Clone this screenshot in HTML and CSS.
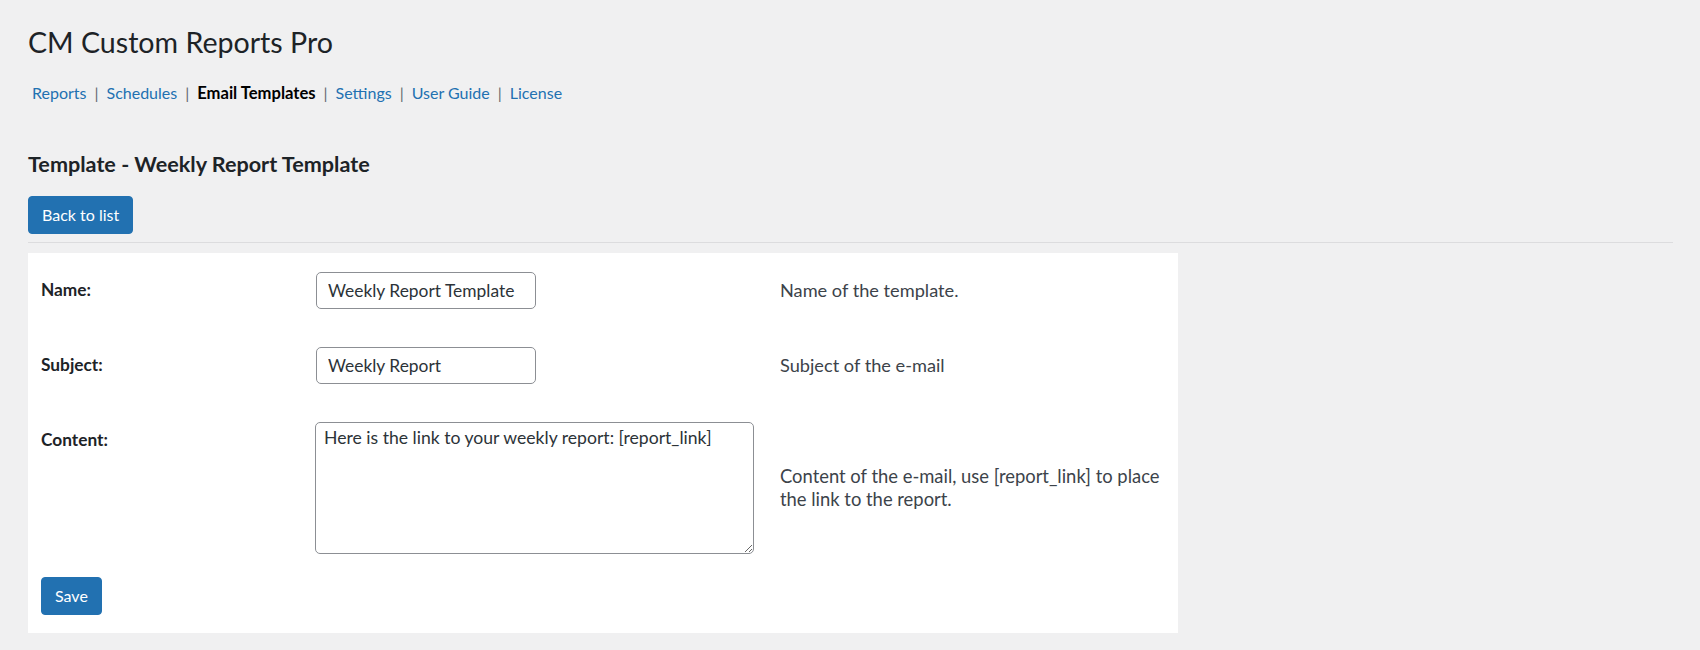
FILE: index.html
```html
<!DOCTYPE html>
<html lang="en">
<head>
<meta charset="utf-8">
<title>CM Custom Reports Pro</title>
<link rel="stylesheet" href="styles.css">
</head>
<body>
<div class="wrap">
  <h1 class="page-title">CM Custom Reports Pro</h1>
  <ul class="subnav">
    <li><a href="#">Reports</a><span class="sep">|</span></li>
    <li><a href="#">Schedules</a><span class="sep">|</span></li>
    <li><a href="#" class="current">Email Templates</a><span class="sep">|</span></li>
    <li><a href="#">Settings</a><span class="sep">|</span></li>
    <li><a href="#">User Guide</a><span class="sep">|</span></li>
    <li><a href="#">License</a></li>
  </ul>
  <h2 class="section-title">Template - Weekly Report Template</h2>
  <a href="#" class="button">Back to list</a>
  <hr class="divider">
  <form class="panel">
    <div class="row">
      <label class="label" for="name">Name:</label>
      <div class="field"><input id="name" class="text-input" type="text" value="Weekly Report Template"></div>
      <div class="desc">Name of the template.</div>
    </div>
    <div class="row">
      <label class="label" for="subject">Subject:</label>
      <div class="field"><input id="subject" class="text-input" type="text" value="Weekly Report"></div>
      <div class="desc">Subject of the e-mail</div>
    </div>
    <div class="row">
      <label class="label" for="content">Content:</label>
      <div class="field"><textarea id="content" class="text-area">Here is the link to your weekly report: [report_link]</textarea></div>
      <div class="desc desc-middle">Content of the e-mail, use [report_link] to place the link to the report.</div>
    </div>
    <div class="actions">
      <button type="button" class="button">Save</button>
    </div>
  </form>
</div>
</body>
</html>
```
FILE: styles.css
```css
html, body {
  margin: 0;
  padding: 0;
  background: #f0f0f1;
}
body {
  font-family: "Lato", "Noto Sans", sans-serif;
  color: #1d2327;
  font-size: 17px;
}
.wrap {
  padding: 0 27px 0 28px;
}
.page-title {
  margin: 22px 0 0;
  font-size: 28.6px;
  line-height: 40px;
  font-weight: 400;
  color: #1d2327;
}
.subnav {
  list-style: none;
  margin: 19px 0 0;
  padding: 0 0 0 4px;
  display: flex;
  font-size: 16px;
  line-height: 24px;
}
.subnav li {
  display: flex;
}
.subnav a {
  color: #2271b1;
  text-decoration: none;
}
.subnav a.current {
  color: #000;
  font-weight: 700;
  font-size: 16.6px;
}
.sep {
  color: #646970;
  margin: 0 8px;
}
.section-title {
  margin: 44px 0 0;
  font-size: 21.6px;
  line-height: 30px;
  font-weight: 700;
  color: #1d2327;
}
.button {
  display: inline-block;
  box-sizing: border-box;
  height: 38px;
  padding: 0 13px;
  border: 1px solid #2271b1;
  border-radius: 4px;
  background: #2271b1;
  color: #fff;
  font-family: inherit;
  font-size: 16px;
  line-height: 36px;
  text-decoration: none;
  cursor: pointer;
}
.wrap > .button {
  margin-top: 17px;
  vertical-align: top;
}
.divider {
  margin: 8px 0 0;
  border: 0;
  border-top: 1px solid #dcdcde;
  height: 0;
}
.panel {
  margin-top: 10px;
  width: 1150px;
  box-sizing: border-box;
  background: #fff;
  padding: 19px 13px 18px;
  display: flex;
  flex-direction: column;
  gap: 38px;
}
.row {
  display: grid;
  grid-template-columns: 275px 464px 385px;
  align-items: start;
}
.label {
  font-size: 17.3px;
  line-height: 24px;
  font-weight: 700;
  color: #1d2327;
  padding-top: 6px;
}
.desc {
  font-size: 18.2px;
  line-height: 24px;
  color: #3c434a;
  padding-top: 6px;
}
.desc-middle {
  align-self: center;
  padding-top: 0;
  line-height: 23px;
  font-size: 18.4px;
}
.field {
  display: flex;
}
.text-input {
  box-sizing: border-box;
  width: 220px;
  height: 37px;
  margin: 0;
  padding: 0 11px;
  border: 1px solid #8c8f94;
  border-radius: 5px;
  background: #fff;
  color: #2c3338;
  font-family: inherit;
  font-size: 17.4px;
  line-height: 24px;
}
.text-area {
  box-sizing: border-box;
  width: 439px;
  height: 132px;
  margin: 0 0 0 -1px;
  padding: 3px 8px;
  border: 1px solid #8c8f94;
  border-radius: 5px;
  background: #fff;
  color: #2c3338;
  font-family: inherit;
  font-size: 17.6px;
  line-height: 24px;
  resize: both;
}
.actions {
  margin-top: -15px;
  display: flex;
}
.actions .button {
  height: 38px;
}
```
